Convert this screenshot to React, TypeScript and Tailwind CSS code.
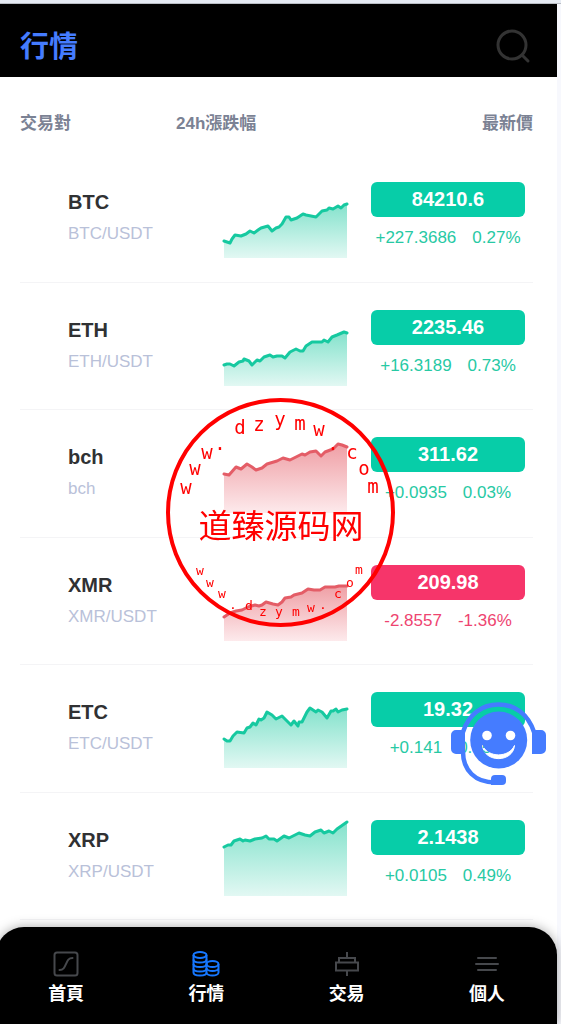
import React from 'react';
import clsx from 'clsx';

interface Market {
  name: string;
  pair: string;
  price: string;
  change: string;
  percent: string;
  isDown?: boolean;
  tone: 'green' | 'red';
  points: string;
}

const markets: Market[] = [
  {
    name: 'BTC', pair: 'BTC/USDT', price: '84210.6', change: '+227.3686', percent: '0.27%', tone: 'green',
    points: '0,62 6,64 8,60 11,56 17,57 22,55 26,52 30,54 34,51 37,49 44,47 48,52 52,49 55,48 58,45 62,38 65,38 67,41 73,39 79,35 82,36 87,37 92,38 98,32 103,31 105,29 109,30 114,27 117,29 120,26 123,25',
  },
  {
    name: 'ETH', pair: 'ETH/USDT', price: '2235.46', change: '+16.3189', percent: '0.73%', tone: 'green',
    points: '0,58 3,57 6,57 10,59 15,55 19,54 20,52 25,54 28,58 33,53 36,54 40,50 46,48 49,50 53,49 58,49 61,51 66,45 72,42 76,44 79,44 82,39 88,35 98,35 100,33 104,35 108,30 113,28 120,25 123,26',
  },
  {
    name: 'bch', pair: 'bch', price: '311.62', change: '+0.0935', percent: '0.03%', tone: 'red',
    points: '0,40 5,41 12,33 17,35 23,30 28,33 32,36 38,34 43,30 53,27 59,24 66,26 72,23 78,20 81,21 86,18 92,17 97,22 101,18 109,15 114,10 118,11 123,13',
  },
  {
    name: 'XMR', pair: 'XMR/USDT', price: '209.98', change: '-2.8557', percent: '-1.36%', isDown: true, tone: 'red',
    points: '0,55 6,51 12,49 18,48 24,45 31,43 35,44 38,43 42,40 49,42 54,43 58,40 61,36 67,35 70,33 78,31 84,27 90,28 96,28 101,25 111,25 115,24 120,24 123,24',
  },
  {
    name: 'ETC', pair: 'ETC/USDT', price: '19.32', change: '+0.141', percent: '0.75%', tone: 'green',
    points: '0,50 3,52 6,52 9,47 13,43 20,44 23,39 26,38 29,34 32,36 35,30 37,31 40,29 43,23 48,26 52,30 58,27 64,33 67,36 70,32 74,37 75,33 78,33 80,29 83,23 86,19 89,21 92,23 94,21 98,23 103,29 107,22 109,22 112,20 114,23 118,21 123,20',
  },
  {
    name: 'XRP', pair: 'XRP/USDT', price: '2.1438', change: '+0.0105', percent: '0.49%', tone: 'green',
    points: '0,30 4,28 7,28 10,24 16,22 19,24 21,23 26,24 31,22 38,21 42,19 45,22 50,22 53,24 60,19 65,21 75,16 81,18 86,19 91,15 97,13 100,16 105,14 109,16 113,12 123,5',
  },
];

const tones = {
  green: { line: '#16c9a0', from: '#84e2cc', to: '#e2f8f3' },
  red: { line: '#e45d67', from: '#ef9fa5', to: '#fdeaec' },
};

const Sparkline: React.FC<{ id: string; points: string; tone: 'green' | 'red' }> = ({ id, points, tone }) => {
  const { line, from, to } = tones[tone];
  return (
    <svg width="123" height="79" viewBox="0 0 123 79" className="block ml-auto overflow-visible" aria-hidden="true">
      <defs>
        <linearGradient id={id} x1="0" y1="0" x2="0" y2="1">
          <stop offset="0" stopColor={from} />
          <stop offset="1" stopColor={to} />
        </linearGradient>
      </defs>
      <polygon points={`0,79 ${points} 123,79`} fill={`url(#${id})`} />
      <polyline points={points} fill="none" stroke={line} strokeWidth="3" strokeLinejoin="round" strokeLinecap="round" />
    </svg>
  );
};

const MarketRow: React.FC<{ market: Market }> = ({ market }) => (
  <tr className="group">
    <td className="h-[127px] group-odd:h-[128px] pt-8 pl-12 align-top border-b border-[#f4f4f6]">
      <div className="text-[20px] leading-[31px] font-bold text-[#303133]">{market.name}</div>
      <div className="text-[17px] leading-[31px] text-[#b9c1d9]">{market.pair}</div>
    </td>
    <td className="pt-6 align-top border-b border-[#f4f4f6]">
      <Sparkline id={`fill-${market.name}`} points={market.points} tone={market.tone} />
    </td>
    <td className="pt-[27px] pl-6 pr-2 align-top border-b border-[#f4f4f6]">
      <div
        className={clsx(
          'h-[35px] rounded-md text-center text-[20px] leading-[35px] font-bold text-white',
          market.isDown ? 'bg-[#f6356a]' : 'bg-[#07cda8]'
        )}
      >
        {market.price}
      </div>
      <div
        className={clsx(
          'mt-2 flex justify-center gap-4 text-[17px] leading-[26px]',
          market.isDown ? 'text-[#ee4470]' : 'text-[#27c9a4]'
        )}
      >
        <span>{market.change}</span>
        <span>{market.percent}</span>
      </div>
    </td>
  </tr>
);

const HomeIcon = () => (
  <svg width="26" height="26" viewBox="0 0 26 26" fill="none" stroke="#46484c" strokeWidth="2" strokeLinecap="round">
    <rect x="1.5" y="1.5" width="23" height="23" rx="2.5" />
    <path d="M6.5 19c4 0 5-2.500 6.500-6s2.500-6 6.500-6" />
  </svg>
);

const CoinsIcon = () => (
  <svg width="28" height="26" viewBox="0 0 28 26" fill="none" stroke="#1677ff" strokeWidth="2">
    <ellipse cx="8" cy="4" rx="6.500" ry="3" />
    <path d="M1.500 4v17.500c0 1.700 2.900 3 6.500 3s6.500-1.300 6.500-3V4" />
    <path d="M1.500 8.500c0 1.700 2.900 3 6.500 3s6.500-1.300 6.500-3M1.500 13c0 1.700 2.900 3 6.500 3s6.500-1.300 6.500-3M1.500 17.500c0 1.700 2.900 3 6.500 3s6.500-1.300 6.500-3" />
    <ellipse cx="20.500" cy="13" rx="6" ry="3" />
    <path d="M26.500 13v8.500c0 1.700-2.700 3-6 3s-6-1.300-6-3M14.500 17c0 1.700 2.700 3 6 3s6-1.300 6-3" />
  </svg>
);

const TradeIcon = () => (
  <svg width="26" height="26" viewBox="0 0 26 26" fill="none" stroke="#46484c" strokeWidth="2">
    <path d="M13 1v6M13 20v5M5 11.500V7h16v4.500" />
    <rect x="2" y="11.500" width="22" height="8" />
  </svg>
);

const MenuIcon = () => (
  <svg width="26" height="26" viewBox="0 0 26 26" stroke="#46484c" strokeWidth="2" strokeLinecap="round">
    <path d="M4 7h18M2 13h22M4 19h18" />
  </svg>
);

const tabs = [
  { label: '首頁', icon: <HomeIcon /> },
  { label: '行情', icon: <CoinsIcon />, active: true },
  { label: '交易', icon: <TradeIcon /> },
  { label: '個人', icon: <MenuIcon /> },
];

const BottomNav = () => (
  <nav className="sticky bottom-0 z-10 -ml-1 mt-auto flex h-[97px] rounded-t-[28px] bg-black pt-6 shadow-[0_0_12px_rgba(0,0,0,0.35)]">
    {tabs.map((tab) => (
      <a
        key={tab.label}
        href="#"
        aria-current={tab.active ? 'page' : undefined}
        className="flex flex-1 flex-col items-center text-[18px] leading-[34px] font-bold text-white"
      >
        {tab.icon}
        {tab.label}
      </a>
    ))}
  </nav>
);

const SupportButton = () => (
  <button type="button" aria-label="客服" className="fixed right-[15px] bottom-[239px] z-10 cursor-pointer">
    <svg width="95" height="83" viewBox="0 0 95 83" className="block">
      <mask id="face">
        <rect width="95" height="83" fill="#fff" />
        <path d="M31.500 43.500C33 61 62 61 63.500 43.500C58 56 37 56 31.500 43.500z" fill="#000" stroke="#000" />
      </mask>
      <circle cx="47.700" cy="38" r="28.500" fill="#457cff" mask="url(#face)" />
      <circle cx="36" cy="33.500" r="4.800" fill="#fff" />
      <circle cx="59.500" cy="33.500" r="4.800" fill="#fff" />
      <path d="M12 30C18 12 31 2.500 47.500 2.500S77 12 83 30" fill="none" stroke="#457cff" strokeWidth="4.500" />
      <path d="M14 28v24H5a5 5 0 0 1-5-5V33a5 5 0 0 1 5-5zM81 28v24h9a5 5 0 0 0 5-5V33a5 5 0 0 0-5-5z" fill="#457cff" />
      <path d="M12 50c0 18 12 30.500 32 30.500" fill="none" stroke="#457cff" strokeWidth="4.500" />
      <path d="M44 73h7q4 0 4 4v2q0 4-4 4H40v-6q0-4 4-4z" fill="#457cff" />
    </svg>
  </button>
);

type Glyph = [string, number, number];

const upperArc: Glyph[] = [
  ['w', 22, 98], ['w', 31, 79], ['w', 43, 63], ['·', 56, 59], ['d', 76, 38], ['z', 95, 35], ['y', 116, 30],
  ['m', 136, 34], ['w', 155, 40], ['·', 169, 59], ['c', 188, 63], ['o', 200, 79], ['m', 209, 97],
];

const lowerArc: Glyph[] = [
  ['w', 36, 179], ['w', 46, 191], ['w', 58, 202], ['.', 69, 213], ['d', 85, 214], ['z', 99, 220], ['y', 115, 220],
  ['m', 132, 220], ['w', 147, 216], ['.', 159, 213], ['c', 174, 202], ['o', 186, 191], ['m', 195, 178],
];

const Stamp = () => (
  <div className="pointer-events-none fixed inset-0 z-20 flex items-center justify-center">
    <svg width="233" height="232" viewBox="0 0 233 232" fill="#f00" textAnchor="middle">
      <circle cx="116.500" cy="116.500" r="112.500" fill="none" stroke="#f00" strokeWidth="4" />
      <g className="font-['DejaVu_Sans_Mono',monospace] text-[19px]">
        {upperArc.map(([char, x, y]) => <text key={x} x={x} y={y}>{char}</text>)}
      </g>
      <text x="117" y="142" className="font-['Noto_Sans_CJK_SC',sans-serif] text-[33px]">道臻源码网</text>
      <g className="font-['DejaVu_Sans_Mono',monospace] text-[13px]">
        {lowerArc.map(([char, x, y]) => <text key={x} x={x} y={y}>{char}</text>)}
      </g>
    </svg>
  </div>
);

const App: React.FC = () => {
  return (
    <div className="min-h-screen bg-[#f7f8fd] pr-1 font-['Liberation_Sans','Noto_Sans_CJK_TC',sans-serif]">
      <div className="flex min-h-screen flex-col bg-white">
        <div className="-mr-1 h-1 border-b border-[#b9bdc4] bg-[#e6ebf3]" />
        <header className="flex h-[73px] items-center justify-between bg-black pt-3 pl-5 pr-6">
          <h1 className="text-[29px] leading-8 font-bold text-[#457cff]">行情</h1>
          <button type="button" aria-label="搜尋" className="cursor-pointer">
            <svg width="40" height="36" viewBox="0 0 40 36" fill="none" stroke="#333" strokeWidth="3" strokeLinecap="round">
              <circle cx="19" cy="16" r="14" />
              <path d="M29 26l6 6" />
            </svg>
          </button>
        </header>

        <main className="pl-5 pr-6">
          <table className="w-full table-fixed border-separate border-spacing-0">
            <thead>
              <tr className="text-[17px] text-[#7b8294]">
                <th className="h-[78px] w-[156px] pt-4 text-left font-bold">交易對</th>
                <th className="pt-4 text-left font-bold">24h漲跌幅</th>
                <th className="w-[186px] pt-4 text-right font-bold">最新價</th>
              </tr>
            </thead>
            <tbody>
              {markets.map((market) => (
                <MarketRow key={market.name} market={market} />
              ))}
            </tbody>
          </table>
        </main>

        <BottomNav />
      </div>
      <SupportButton />
      <Stamp />
    </div>
  );
};

export default App;
